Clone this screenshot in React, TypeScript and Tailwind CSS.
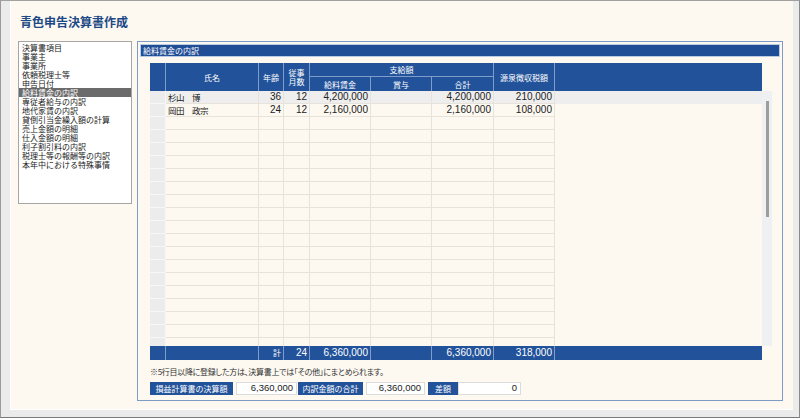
import React from "react";

const font = "font-['Noto_Sans_CJK_JP',sans-serif]";
const num = "font-['Liberation_Sans',sans-serif]";
const cols = "grid grid-cols-[16px_93px_25px_26px_61px_61px_62px_61px_1fr]";

const menuItems = [
  "決算書項目",
  "事業主",
  "事業所",
  "依頼税理士等",
  "申告日付",
  "給料賃金の内訳",
  "専従者給与の内訳",
  "地代家賃の内訳",
  "貸倒引当金繰入額の計算",
  "売上金額の明細",
  "仕入金額の明細",
  "利子割引料の内訳",
  "税理士等の報酬等の内訳",
  "本年中における特殊事情",
];

interface Employee {
  name: string;
  age: string;
  months: string;
  salary: string;
  bonus: string;
  total: string;
  tax: string;
}

const employees: Employee[] = [
  { name: "杉山　博", age: "36", months: "12", salary: "4,200,000", bonus: "", total: "4,200,000", tax: "210,000" },
  { name: "岡田　政宗", age: "24", months: "12", salary: "2,160,000", bonus: "", total: "2,160,000", tax: "108,000" },
];

const headCell = "flex items-center justify-center border-r border-[#7f9dca] text-[8px] leading-[9px] text-white";
const lines = "border-r border-b border-[#e7e3da]";
const bodyCell = `${lines} ${num} pr-[2px] text-right text-[10px] leading-[12px] text-[#222]`;
const nameCell = `${lines} pl-[2px] text-left text-[8.5px] leading-[12px] tracking-[-0.5px] text-[#222]`;
const footCell = `border-r border-[#7f9dca] ${num} pr-[2px] text-right text-[10px] leading-[14px] text-white`;

function TableHeader() {
  return (
    <div className={`${cols} h-[28px] w-[612px] grid-rows-[14px_14px] bg-[#22529a]`}>
      <div className={`${headCell} row-span-2`} />
      <div className={`${headCell} row-span-2`}>氏名</div>
      <div className={`${headCell} row-span-2`}>年齢</div>
      <div className={`${headCell} row-span-2 flex-col`}>
        <span>従事</span>
        <span>月数</span>
      </div>
      <div className={`${headCell} col-span-3 border-b`}>支給額</div>
      <div className={`${headCell} row-span-2`}>源泉徴収税額</div>
      <div className="row-span-2" />
      <div className={headCell}>給料賃金</div>
      <div className={headCell}>賞与</div>
      <div className={headCell}>合計</div>
    </div>
  );
}

function TableBody() {
  const rows = Array.from({ length: 20 }, (_, i) => employees[i]);
  return (
    <div className="flex h-[255px]">
      <div className="h-full w-[612px] overflow-hidden">
        {rows.map((row, i) => (
          <div key={i} className={`${cols} h-[13px] ${i === 0 ? "bg-[#eeeeee]" : ""}`}>
            <div className="border-r border-b border-[#f7f7f7] bg-[#ececec]" />
            <div className={nameCell}>{row?.name}</div>
            <div className={bodyCell}>{row?.age}</div>
            <div className={bodyCell}>{row?.months}</div>
            <div className={bodyCell}>{row?.salary}</div>
            <div className={bodyCell}>{row?.bonus}</div>
            <div className={bodyCell}>{row?.total}</div>
            <div className={bodyCell}>{row?.tax}</div>
            <div />
          </div>
        ))}
      </div>
      <div className="w-[10px] bg-[#eef0f1] pt-[10px]">
        <div className="mx-auto h-[116px] w-[3px] bg-[#9d9d9d]" />
      </div>
    </div>
  );
}

function TableFooter() {
  return (
    <div className={`${cols} h-[14px] w-[612px] bg-[#22529a]`}>
      <div className={footCell} />
      <div className={footCell} />
      <div className="border-r border-[#7f9dca] pr-[2px] text-right text-[8px] leading-[14px] text-white">計</div>
      <div className={footCell}>24</div>
      <div className={footCell}>6,360,000</div>
      <div className={footCell} />
      <div className={footCell}>6,360,000</div>
      <div className={footCell}>318,000</div>
      <div />
    </div>
  );
}

function Summary() {
  const label = "flex h-full items-center justify-center bg-[#22529a] text-[8px] text-white";
  const box = `flex h-full items-center justify-end border border-[#dcdcdc] bg-white pr-[3px] ${num} text-[9.5px] text-[#222]`;
  return (
    <div className="mt-[4px] flex h-[13px] items-center">
      <div className={`${label} w-[83px]`}>損益計算書の決算額</div>
      <div className={`${box} ml-[3px] w-[61px]`}>6,360,000</div>
      <div className={`${label} ml-[1px] w-[65px]`}>内訳金額の合計</div>
      <div className={`${box} ml-[3px] w-[59px]`}>6,360,000</div>
      <div className={`${label} ml-[3px] w-[30px]`}>差額</div>
      <div className={`${box} w-[63px]`}>0</div>
    </div>
  );
}

export default function App() {
  return (
    <div
      className={`${font} flex h-[418px] w-[800px] border-t border-l border-r border-b border-t-[#a0a0a0] border-l-[#9a9a9a] border-r-[#8a8a8a] border-b-[#7a7a7a] bg-[#ebebeb] pb-[7px] pl-[9px] pr-[6px]`}
    >
      <div className="flex flex-1 flex-col border-l border-b border-white bg-[#fdf9f1] px-[7px] pt-[14px]">
        <h1 className="ml-[2px] text-[12px] leading-[14px] font-bold text-[#1c4886]">青色申告決算書作成</h1>
        <div className="mt-[12px] flex gap-[5px]">
          <ul className="h-[163px] w-[114px] border border-[#a6a6a6] bg-white pt-px">
            {menuItems.map((item, i) => (
              <li
                key={item}
                className={`h-[9px] overflow-visible pl-[3px] text-[8px] leading-[9px] ${i === 5 ? "bg-[#6b6b6b] text-white" : "text-[#222]"}`}
              >
                {item}
              </li>
            ))}
          </ul>

          <section className="flex h-[360px] w-[646px] flex-col border border-[#7d9bc4] px-[2px] pt-[2px]">
            <div className="h-[13px] border border-[#b9cce4] bg-[#1f4e96] pl-[2px] text-[8px] leading-[11px] text-white">
              給料賃金の内訳
            </div>
            <div className="mt-[6px] ml-[10px]">
              <TableHeader />
              <TableBody />
              <TableFooter />
              <p className="mt-[6px] text-[8px] leading-[12px] tracking-[-0.3px] text-[#333] [font-feature-settings:'palt']">
                ※5行目以降に登録した方は、決算書上では「その他」にまとめられます。
              </p>
              <Summary />
            </div>
          </section>
        </div>
      </div>
    </div>
  );
}
